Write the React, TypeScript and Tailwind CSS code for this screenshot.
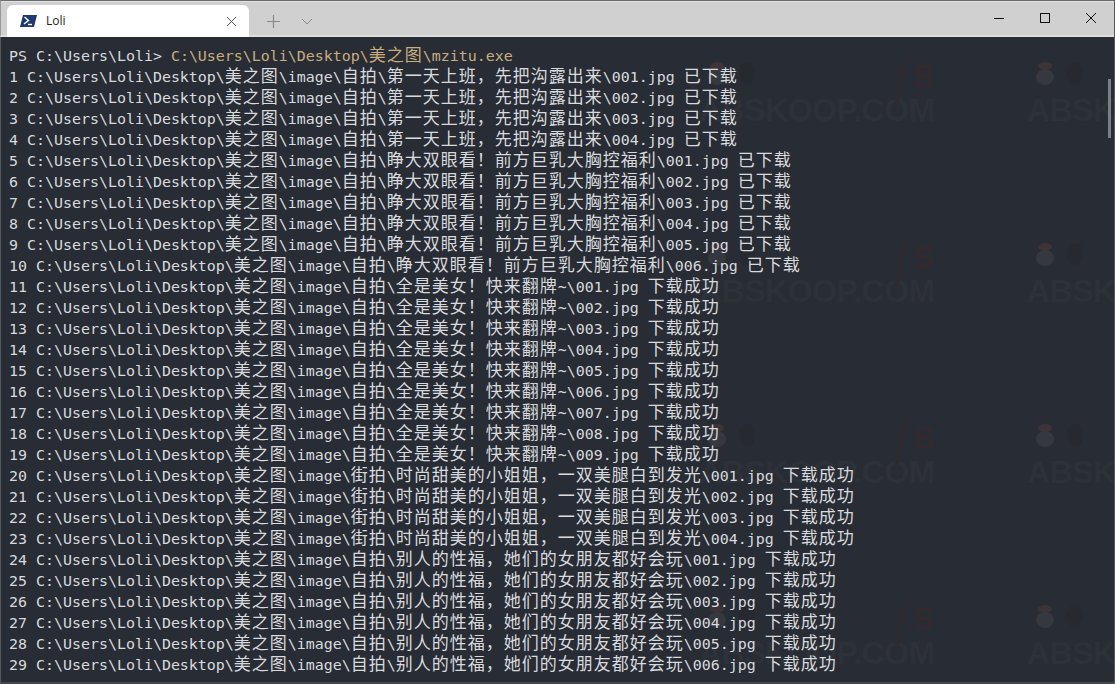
import React from 'react';

const groups: [string, string, number, string][] = [
  ['自拍', '第一天上班，先把沟露出来', 4, '已下载'],
  ['自拍', '睁大双眼看！前方巨乳大胸控福利', 6, '已下载'],
  ['自拍', '全是美女！快来翻牌~', 9, '下载成功'],
  ['街拍', '时尚甜美的小姐姐，一双美腿白到发光', 4, '下载成功'],
  ['自拍', '别人的性福，她们的女朋友都好会玩', 6, '下载成功'],
];

function buildLines() {
  const lines: string[] = [];
  let n = 1;
  for (const [cat, title, count, status] of groups) {
    for (let i = 1; i <= count; i++) {
      lines.push(`${n} C:\\Users\\Loli\\Desktop\\美之图\\image\\${cat}\\${title}\\00${i}.jpg ${status}`);
      n++;
    }
  }
  return lines;
}

// CJK cells are twice the latin cell (18px vs 9px) in the terminal
function TermText({ text }: { text: string }) {
  const parts = text.split(/([\u3000-\u9fff\uff00-\uffef]+)/);
  return (
    <>
      {parts.map((part, i) =>
        i % 2 === 1 ? (
          <span key={i} className="text-[17px] tracking-[1px] leading-none font-['Noto_Sans_CJK_SC',sans-serif]">
            {part}
          </span>
        ) : (
          <span key={i}>{part}</span>
        ),
      )}
    </>
  );
}

// faint site mark tiled behind the terminal text
function Watermark() {
  return (
    <div className="w-[328px] h-[181px] flex flex-col">
      <div className="relative h-[42px]">
        <svg className="absolute left-[7px] top-[5px]" width="72" height="30" viewBox="0 0 72 30">
          <ellipse cx="11" cy="6" rx="7" ry="4" fill="#3e3438" />
          <ellipse cx="11" cy="17" rx="9" ry="8" fill="#36383f" />
          <ellipse cx="41" cy="13" rx="8" ry="11" fill="#262930" />
        </svg>
        <span className="absolute left-[195px] top-[-6px] text-[50px] leading-[54px] italic font-['Liberation_Serif',serif] text-[#2e2a30]">f</span>
        <span className="absolute left-[214px] top-[3px] text-[32px] leading-[36px] font-bold font-['Liberation_Sans',sans-serif] text-[#332a2f]">S</span>
      </div>
      <div className="text-[32px] leading-[26px] font-['Liberation_Sans',sans-serif] font-bold tracking-[-0.5px] text-[#2d3138]">ABSKOOP.COM</div>
    </div>
  );
}

export default function App() {
  return (
    <div className="w-[1115px] h-[684px] overflow-hidden flex flex-col bg-[#282c34] border-r border-[#55585e]">
      <div className="h-[37px] flex items-end bg-[#cfd0cf] border-t border-l border-b-2 border-t-[#6b6b6b] border-l-[#999999] border-b-[#dcdfda] shadow-[inset_0_1px_0_#e2e2e2] pl-[6px] font-['Open_Sans',sans-serif]">
        <div className="w-[242px] h-[32px] -mb-[2px] bg-white rounded-t-md flex items-center pl-[13px] pr-[12px]">
          <svg width="17" height="12" viewBox="0 0 17 12">
            <path d="M3 0H17L14 12H0Z" fill="#1f3a6e" />
            <path d="M4.5 2L8.5 5.5L4 9" fill="none" stroke="#fff" strokeWidth="1.4" />
            <path d="M8 9.5H12" stroke="#fff" strokeWidth="1.4" />
          </svg>
          <span className="ml-[9px] text-xs text-[#222]">Loli</span>
          <svg className="ml-auto" width="11" height="11" viewBox="0 0 11 11">
            <path d="M1 1L10 10M10 1L1 10" stroke="#555" strokeWidth="1" />
          </svg>
        </div>
        <div className="h-[32px] flex items-center pl-[18px] gap-[21px] -mb-[2px]">
          <svg width="13" height="13" viewBox="0 0 13 13">
            <path d="M6.5 0V13M0 6.5H13" stroke="#8a8a8a" strokeWidth="1.2" />
          </svg>
          <svg width="12" height="7" viewBox="0 0 12 7">
            <path d="M1 1L6 6L11 1" fill="none" stroke="#8a8a8a" strokeWidth="1" />
          </svg>
        </div>
        <div className="ml-auto h-[34px] flex items-center">
          <div className="w-[46px] flex justify-center">
            <div className="w-[10px] h-px bg-[#111]" />
          </div>
          <div className="w-[46px] flex justify-center">
            <div className="w-[10px] h-[10px] border border-[#111]" />
          </div>
          <div className="w-[46px] flex justify-center">
            <svg width="10" height="10" viewBox="0 0 10 10">
              <path d="M0 0L10 10M10 0L0 10" stroke="#111" strokeWidth="1" />
            </svg>
          </div>
        </div>
      </div>
      <div className="relative flex-1 overflow-hidden pl-[8px] pt-[8px] font-['DejaVu_Sans_Mono','Noto_Sans_CJK_SC',monospace] text-[14.95px] text-[#d8dade] whitespace-pre border-l border-b-2 border-l-[#55585e] border-b-[#44474d]">
        <div className="absolute left-[698px] top-[18px] grid grid-cols-[repeat(2,328px)]">
          {Array.from({ length: 8 }, (_, i) => (
            <Watermark key={i} />
          ))}
        </div>
        <div className="relative h-[21px] leading-[21px]">
          PS C:\Users\Loli&gt;{' '}
          <span className="text-[#c8ad7f]">
            <TermText text="C:\Users\Loli\Desktop\美之图\mzitu.exe" />
          </span>
        </div>
        {buildLines().map((line) => (
          <div key={line} className="relative h-[21px] leading-[21px]">
            <TermText text={line} />
          </div>
        ))}
        <div className="absolute right-[3px] top-[42px] w-[3px] h-[59px] bg-[#7a7e86]" />
      </div>
    </div>
  );
}
